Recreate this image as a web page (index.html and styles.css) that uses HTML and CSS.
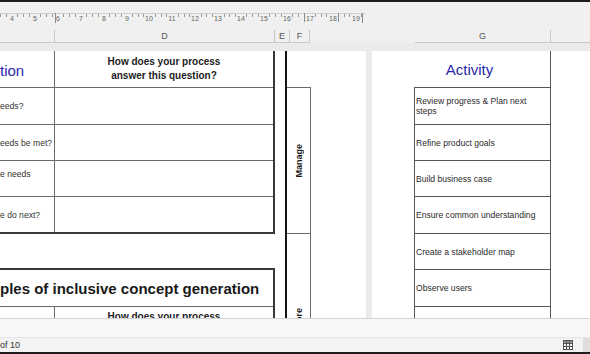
FILE: index.html
```html
<!DOCTYPE html>
<html lang="en">
<head>
  <meta charset="UTF-8" />
  <title>Inclusive design process review</title>
  <link rel="stylesheet" href="styles.css">
</head>
<body>
  <div class="app">
    <div class="edge"></div>

    <div class="ruler">
      <svg width="590" height="28" viewBox="0 0 590 28">
        <line x1="0" y1="11.5" x2="365" y2="11.5" stroke="#cfcfcf" />
        <path stroke="#9a9a9a" stroke-width="1" d="M0.5 12v3M6.5 12v3M17.5 12v3M23.5 12v3M29.5 12v3M40.5 12v3M46.5 12v3M52.5 12v3M63.5 12v3M69.5 12v3M75.5 12v3M86.5 12v3M92.5 12v3M98.5 12v3M109.5 12v3M115.5 12v3M121.5 12v3M132.5 12v3M138.5 12v3M143.5 12v3M155.5 12v3M161.5 12v3M166.5 12v3M178.5 12v3M184.5 12v3M189.5 12v3M201.5 12v3M206.5 12v3M212.5 12v3M224.5 12v3M229.5 12v3M235.5 12v3M246.5 12v3M252.5 12v3M258.5 12v3M269.5 12v3M275.5 12v3M281.5 12v3M292.5 12v3M298.5 12v3M304.5 12v3M315.5 12v3M321.5 12v3M326.5 12v3M338.5 12v3M344.5 12v3M349.5 12v3M361.5 12v3" />
        <path stroke="#8a8a8a" d="M55.5 11v10M304.5 11v9M338.5 11v9M362.5 11v10" />
        <g class="nums" text-anchor="middle">
          <text x="12" y="19">4</text>
          <text x="35" y="19">5</text>
          <text x="58" y="19">6</text>
          <text x="81" y="19">7</text>
          <text x="104" y="19">8</text>
          <text x="127" y="19">9</text>
          <text x="149" y="19">10</text>
          <text x="172" y="19">11</text>
          <text x="195" y="19">12</text>
          <text x="218" y="19">13</text>
          <text x="241" y="19">14</text>
          <text x="264" y="19">15</text>
          <text x="287" y="19">16</text>
          <text x="310" y="19">17</text>
          <text x="333" y="19">18</text>
          <text x="356" y="19">19</text>
        </g>
      </svg>
    </div>

    <div class="colheads">
      <div class="ch ch-c"></div>
      <div class="ch ch-d">D</div>
      <div class="ch ch-e">E</div>
      <div class="ch ch-f">F</div>
      <div class="ch ch-gap"></div>
      <div class="ch ch-g">G</div>
      <div class="ch ch-h"></div>
    </div>

    <div class="sheet">
      <div class="page page-left">
        <div class="qblock">
          <div class="qtable">
            <div class="row head">
              <div class="q title">tion</div>
              <div class="a">How does your process<br>answer this question?</div>
            </div>
            <div class="row r37">
              <div class="q">eeds?</div>
              <div class="a"></div>
            </div>
            <div class="row r36">
              <div class="q">eeds be met?</div>
              <div class="a"></div>
            </div>
            <div class="row r36">
              <div class="q top">e needs</div>
              <div class="a"></div>
            </div>
            <div class="row r37 last">
              <div class="q">e do next?</div>
              <div class="a"></div>
            </div>
          </div>

          <div class="qtable second">
            <div class="row banner">ples of inclusive concept generation</div>
            <div class="row r37">
              <div class="q"></div>
              <div class="a sub">How does your process<br>answer this question?</div>
            </div>
          </div>
        </div>

        <div class="phases">
          <div class="phase-head"></div>
          <div class="phase manage"><span>Manage</span></div>
          <div class="phase explore"><span>Explore</span></div>
        </div>
      </div>

      <div class="page page-right">
        <div class="acthead">
          <div class="acttitle">Activity</div>
          <div class="actrest"></div>
        </div>
        <div class="acttable">
          <div class="arow h36"><div class="act">Review progress &amp; Plan next<br>steps</div><div class="val"></div></div>
          <div class="arow h35"><div class="act">Refine product goals</div><div class="val"></div></div>
          <div class="arow h35"><div class="act">Build business case</div><div class="val"></div></div>
          <div class="arow h36"><div class="act">Ensure common understanding</div><div class="val"></div></div>
          <div class="arow h35"><div class="act">Create a stakeholder map</div><div class="val"></div></div>
          <div class="arow h36"><div class="act">Observe users</div><div class="val"></div></div>
          <div class="arow h36"><div class="act"></div><div class="val"></div></div>
        </div>
      </div>
    </div>

    <div class="status">
      <div class="status-top"></div>
      <div class="status-bottom">
        <span class="pages">of 10</span>
        <svg class="grid-icon" width="10" height="10" viewBox="0 0 10 10">
          <rect x="0.5" y="0.5" width="9" height="3" fill="#9a9a9a" />
          <rect x="0.5" y="0.5" width="9" height="9" fill="none" stroke="#555" />
          <path d="M3.5 0.5v9M6.5 0.5v9M0.5 3.5h9M0.5 6.5h9" stroke="#555" />
        </svg>
        <div class="corner"></div>
      </div>
    </div>

    <div class="edge"></div>
  </div>
</body>
</html>
```

FILE: styles.css
```css
body {
  margin: 0;
  font-family: "Liberation Sans", Arial, sans-serif;
  background: #f0f0f0;
  overflow: hidden;
}
.app {
  width: 590px;
  height: 354px;
  display: flex;
  flex-direction: column;
  overflow: hidden;
}
.edge {
  height: 2px;
  flex: none;
  background: #1e1e1e;
}
.ruler {
  height: 28px;
  flex: none;
}
.ruler svg {
  display: block;
}
.nums {
  font-family: "Liberation Sans", Arial, sans-serif;
  font-size: 7px;
  fill: #666;
}

/* column letters */
.colheads {
  height: 13px;
  flex: none;
  display: flex;
  font-size: 9px;
  color: #555;
}
.ch {
  box-sizing: border-box;
  border-bottom: 1px solid #c8c8c8;
  border-right: 1px solid #c8c8c8;
  text-align: center;
  line-height: 13px;
  flex: none;
}
.ch-c { width: 55px; }
.ch-d { width: 220px; }
.ch-e { width: 15px; }
.ch-f { width: 20px; }
.ch-gap { width: 105px; border: none; }
.ch-g { width: 136px; }
.ch-h { flex: 1; border-right: none; }

/* page area */
.sheet {
  height: 275px;
  flex: none;
  box-sizing: border-box;
  padding-top: 8px;
  background: #ebebeb;
  display: flex;
  gap: 6px;
  overflow: hidden;
}
.page {
  height: 267px;
  background: #fff;
  overflow: hidden;
  display: flex;
  align-items: flex-start;
}
.page-left {
  width: 366px;
  flex: none;
}
.page-right {
  flex: 1;
  flex-direction: column;
}

/* left question table */
.qblock {
  width: 275px;
  flex: none;
}
.qtable {
  border-right: 2px solid #383838;
}
.qtable.second {
  margin-top: 34px;
  border-top: 2px solid #383838;
}
.row {
  display: flex;
  border-bottom: 1px solid #6a6a6a;
}
.row.head { height: 36px; }
.row.r37 { height: 36px; }
.row.r36 { height: 35px; }
.row.last {
  height: 35px;
  border-bottom: 2px solid #383838;
}
.q {
  width: 55px;
  flex: none;
  box-sizing: border-box;
  border-right: 1px solid #6a6a6a;
  display: flex;
  align-items: center;
  font-size: 8.6px;
  color: #333;
  white-space: nowrap;
  overflow: hidden;
}
.q.top {
  align-items: flex-start;
  padding-top: 8px;
}
.q.title {
  font-size: 15px;
  color: #2a2aaa;
  padding-top: 2px;
}
.a {
  flex: 1;
  text-align: center;
  font-size: 10px;
  font-weight: bold;
  color: #222;
  line-height: 14px;
  padding-top: 4px;
}
.a.sub {
  padding-top: 3px;
}
.row.banner {
  height: 36px;
  align-items: center;
  font-size: 15px;
  font-weight: bold;
  color: #1a1a1a;
  white-space: nowrap;
  overflow: hidden;
}

/* phase labels */
.phases {
  margin-left: 10px;
  width: 26px;
  flex: none;
  box-sizing: border-box;
  border-left: 2px solid #151515;
  align-self: stretch;
}
.phase-head {
  height: 36px;
}
.phase {
  box-sizing: border-box;
  border-top: 1px solid #6a6a6a;
  border-right: 1px solid #6a6a6a;
  display: flex;
  align-items: center;
  justify-content: center;
  font-size: 9px;
  font-weight: bold;
  color: #1a1a1a;
}
.phase span {
  writing-mode: vertical-rl;
  transform: rotate(180deg);
}
.phase.manage { height: 146px; }
.phase.explore { height: 182px; }

/* right activity table */
.acthead {
  display: flex;
  height: 36px;
  flex: none;
}
.acttitle {
  width: 179px;
  flex: none;
  box-sizing: border-box;
  border-right: 1px solid #555;
  padding-left: 17px;
  text-align: center;
  line-height: 38px;
  font-size: 15px;
  color: #2a2aaa;
}
.acttable {
  margin-left: 42px;
  border-top: 1px solid #555;
  border-left: 1px solid #555;
}
.arow {
  display: flex;
  border-bottom: 1px solid #555;
}
.arow.h36 { height: 36px; }
.arow.h35 { height: 35px; }
.act {
  width: 136px;
  flex: none;
  box-sizing: border-box;
  border-right: 1px solid #555;
  padding-left: 1px;
  display: flex;
  align-items: center;
  font-size: 8.6px;
  line-height: 10px;
  color: #2a2a2a;
}
.val {
  flex: 1;
}

/* status bar */
.status {
  height: 34px;
  flex: none;
  box-sizing: border-box;
  border-top: 1px solid #d4d4d4;
  background: #f7f7f7;
  display: flex;
  flex-direction: column;
}
.status-top {
  height: 18px;
}
.status-bottom {
  flex: 1;
  display: flex;
  align-items: center;
  background: #f3f3f3;
  border-top: 1px solid #e6e6e6;
}
.pages {
  font-size: 9px;
  color: #333;
  margin-left: 0;
}
.grid-icon {
  display: block;
  margin-left: auto;
  margin-right: 10px;
}
.corner {
  width: 7px;
  align-self: stretch;
  background: #dedede;
}
```
